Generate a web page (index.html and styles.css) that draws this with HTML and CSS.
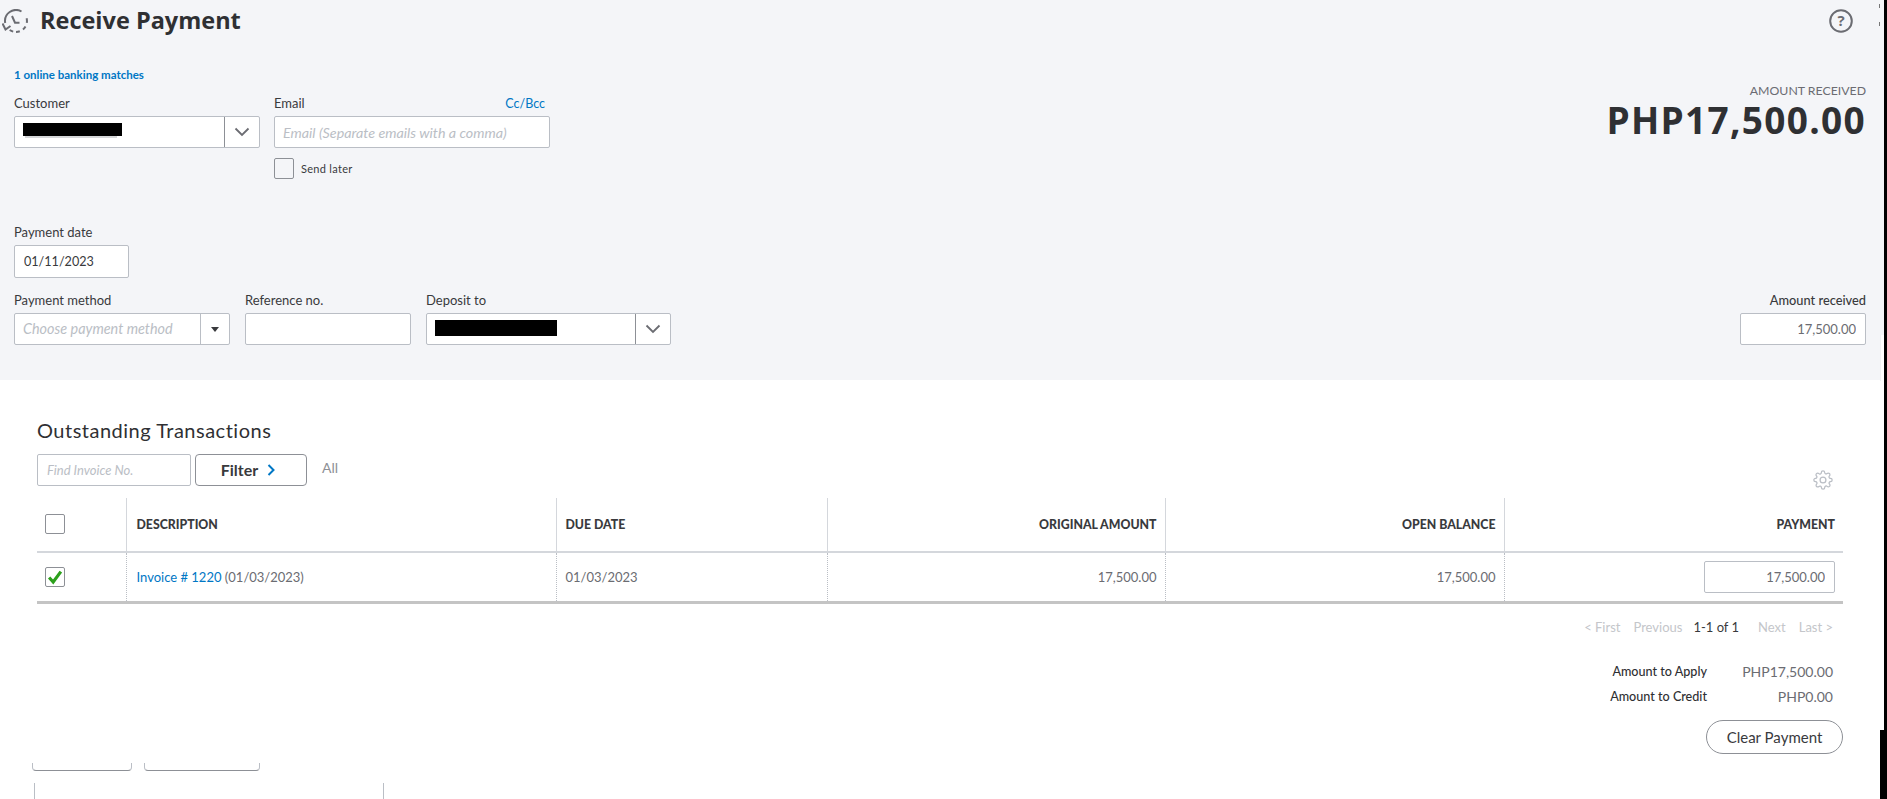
FILE: index.html
```html
<!DOCTYPE html>
<html lang="en">
<head>
<meta charset="utf-8">
<title>Receive Payment</title>
<link rel="stylesheet" href="styles.css">
</head>
<body>
<div class="page">
  <main class="main">
    <section class="panel">
      <header class="title-row">
        <svg class="history-icon" viewBox="0 0 26 24" width="26" height="24" aria-hidden="true">
          <path class="ic-line" d="M3.200 14A11 11 0 0 1 19.500 2.500"/>
          <path class="ic-line" d="M24.600 9.200A11 11 0 0 1 24.800 13.900M23.500 17.500A11 11 0 0 1 21 20.400M17.800 22.300A11 11 0 0 1 14 23M11.200 22.600A11 11 0 0 1 7.700 21"/>
          <path class="ic-line" d="M0.500 14.500L3.500 20.500L8.500 17"/>
          <path class="ic-line" d="M10 7L13 13.700L17.500 13.700"/>
        </svg>
        <h1 class="title">Receive Payment</h1>
        <svg class="help-icon" viewBox="0 0 24 24" width="24" height="24" aria-hidden="true">
          <circle class="ic-line" cx="12" cy="12" r="10.800"/>
          <text class="help-q" x="12" y="17">?</text>
        </svg>
      </header>

      <div class="top-row">
        <div class="top-left">
          <a class="match-link">1 online banking matches</a>
          <div class="field-row">
            <div class="field w-customer">
              <label class="label">Customer</label>
              <div class="combo">
                <span class="combo-value"><span class="redact redact-customer"></span><span class="smudge"></span></span>
                <span class="combo-btn combo-btn-wide">
                  <svg class="chev" viewBox="0 0 16 10" width="16" height="10" aria-hidden="true"><path d="M1.500 1.500L8 8l6.500-6.500"/></svg>
                </span>
              </div>
            </div>
            <div class="field w-email">
              <div class="label-row">
                <label class="label">Email</label>
                <a class="cc">Cc/Bcc</a>
              </div>
              <input class="input input-roomy" type="text" placeholder="Email (Separate emails with a comma)">
              <div class="check-row">
                <span class="check"></span>
                <span class="small-text">Send later</span>
              </div>
            </div>
          </div>
        </div>
        <div class="amount-top">
          <div class="amount-caption">AMOUNT RECEIVED</div>
          <div class="amount-big">PHP17,500.00</div>
        </div>
      </div>

      <div class="field date-field">
        <label class="label">Payment date</label>
        <input class="input date-input" type="text" value="01/11/2023">
      </div>

      <div class="method-row">
        <div class="field w-method">
          <label class="label">Payment method</label>
          <div class="combo">
            <span class="combo-value placeholder">Choose payment method</span>
            <span class="combo-btn combo-btn-narrow"><span class="caret"></span></span>
          </div>
        </div>
        <div class="field w-ref">
          <label class="label">Reference no.</label>
          <input class="input" type="text">
        </div>
        <div class="field w-deposit">
          <label class="label">Deposit to</label>
          <div class="combo">
            <span class="combo-value"><span class="redact redact-deposit"></span></span>
            <span class="combo-btn combo-btn-deposit">
              <svg class="chev" viewBox="0 0 16 10" width="16" height="10" aria-hidden="true"><path d="M1.500 1.500L8 8l6.500-6.500"/></svg>
            </span>
          </div>
        </div>
        <div class="field w-received">
          <label class="label label-strong">Amount received</label>
          <input class="input num-input" type="text" value="17,500.00">
        </div>
      </div>
    </section>

    <section class="lower">
      <h2 class="section-title">Outstanding Transactions</h2>
      <div class="filter-row">
        <input class="input find-input" type="text" placeholder="Find Invoice No.">
        <button class="filter-btn" type="button">Filter
          <svg class="filter-chev" viewBox="0 0 8 12" width="8" height="12" aria-hidden="true"><path d="M1.500 1l5 5-5 5"/></svg>
        </button>
        <span class="filter-all">All</span>
        <svg class="gear" viewBox="0 0 24 24" width="20" height="20" aria-hidden="true">
          <circle cx="12" cy="12" r="3.500"/>
          <path d="M19.400 15a1.650 1.650 0 0 0 .33 1.820l.06.06a2 2 0 0 1 0 2.830 2 2 0 0 1-2.830 0l-.06-.06a1.650 1.650 0 0 0-1.820-.33 1.650 1.650 0 0 0-1 1.510V21a2 2 0 0 1-2 2 2 2 0 0 1-2-2v-.09A1.650 1.650 0 0 0 9 19.400a1.650 1.650 0 0 0-1.820.33l-.06.06a2 2 0 0 1-2.830 0 2 2 0 0 1 0-2.830l.06-.06a1.650 1.650 0 0 0 .33-1.820 1.650 1.650 0 0 0-1.510-1H3a2 2 0 0 1-2-2 2 2 0 0 1 2-2h.09A1.650 1.650 0 0 0 4.600 9a1.650 1.650 0 0 0-.33-1.820l-.06-.06a2 2 0 0 1 0-2.830 2 2 0 0 1 2.830 0l.06.06a1.650 1.650 0 0 0 1.820.33H9a1.650 1.650 0 0 0 1-1.510V3a2 2 0 0 1 2-2 2 2 0 0 1 2 2v.09a1.650 1.650 0 0 0 1 1.510 1.650 1.650 0 0 0 1.820-.33l.06-.06a2 2 0 0 1 2.830 0 2 2 0 0 1 0 2.830l-.06.06a1.650 1.650 0 0 0-.33 1.820V9a1.650 1.650 0 0 0 1.510 1H21a2 2 0 0 1 2 2 2 2 0 0 1-2 2h-.09a1.650 1.650 0 0 0-1.510 1z"/>
        </svg>
      </div>

      <table class="tx-table">
        <colgroup>
          <col class="col-check"><col class="col-desc"><col class="col-due"><col class="col-orig"><col class="col-open"><col class="col-pay">
        </colgroup>
        <thead>
          <tr>
            <th class="cell-check"><span class="check check-head"></span></th>
            <th>DESCRIPTION</th>
            <th class="cell-due">DUE DATE</th>
            <th class="right">ORIGINAL AMOUNT</th>
            <th class="right">OPEN BALANCE</th>
            <th class="right">PAYMENT</th>
          </tr>
        </thead>
        <tbody>
          <tr>
            <td class="cell-check">
              <span class="check check-head check-on">
                <svg viewBox="0 0 20 20" width="18" height="18" aria-hidden="true"><path d="M3.500 10.500l4.500 5L16.500 4" class="tick"/></svg>
              </span>
            </td>
            <td><a class="inv-link">Invoice # 1220</a> (01/03/2023)</td>
            <td class="cell-due">01/03/2023</td>
            <td class="right">17,500.00</td>
            <td class="right">17,500.00</td>
            <td class="right"><input class="input pay-input" type="text" value="17,500.00"></td>
          </tr>
        </tbody>
      </table>

      <nav class="pager">
        <span class="pg-off">&lt; First</span>
        <span class="pg-off">Previous</span>
        <span class="pg-on">1-1 of 1</span>
        <span class="pg-off">Next</span>
        <span class="pg-off">Last &gt;</span>
      </nav>

      <div class="totals">
        <span class="total-label">Amount to Apply</span><span class="total-value">PHP17,500.00</span>
        <span class="total-label">Amount to Credit</span><span class="total-value">PHP0.00</span>
      </div>

      <div class="clear-row"><button class="clear-btn" type="button">Clear Payment</button></div>

      <div class="stubs">
        <span class="stub stub-a"></span>
        <span class="stub stub-b"></span>
      </div>
      <div class="memo-edge"></div>
    </section>
  </main>
  <div class="edge"></div>
  <span class="tick-mark tick-a"></span>
  <span class="tick-mark tick-b"></span>
  <span class="white-notch"></span>
  <span class="black-notch"></span>
</div>
</body>
</html>
```

FILE: styles.css
```css
* { box-sizing: border-box; }
html, body { margin: 0; height: 799px; overflow: hidden; background: #fff; }
body { font-family: "Lato", "Open Sans", sans-serif; font-size: 13px; color: #393a3d; }

.page { position: relative; display: flex; width: 1887px; height: 799px; }
.main { flex: 1; min-width: 0; display: flex; flex-direction: column; }
.edge { width: 3px; background: #000; }

.panel { height: 381px; padding: 0 18px 0 14px; background: #f4f5f8; }
.title-row { display: flex; align-items: center; height: 41px; margin-left: -12px; }
.history-icon { flex: none; }
.ic-line { fill: none; stroke: #6b6c72; stroke-width: 2; }
.title { margin: 0 0 0 12px; font-family: "Open Sans", sans-serif; font-size: 23.500px; font-weight: 700; line-height: 41px; color: #2f3033; }
.help-icon { margin-left: auto; margin-right: 13px; flex: none; }
.help-q { font-family: "Open Sans", sans-serif; font-size: 15px; font-weight: 700; fill: #6b6c72; text-anchor: middle; }

.top-row { display: flex; justify-content: space-between; margin-top: 26px; }
.match-link { display: block; font-size: 11.500px; line-height: 16px; font-weight: 700; color: #0077c5; }
.field-row { display: flex; gap: 14px; margin-top: 12px; }
.field { display: flex; flex-direction: column; }
.w-customer { width: 246px; }
.w-email { width: 276px; }
.w-method { width: 216px; }
.w-ref { width: 166px; }
.w-deposit { width: 245px; }
.w-received { width: 126px; margin-left: auto; }

.label { display: block; height: 16px; margin-bottom: 5px; font-size: 13px; line-height: 16px; color: #393a3d; }
.label-strong { text-align: right; font-weight: 500; font-size: 12.800px; }
.label-row { display: flex; justify-content: space-between; padding-right: 5px; }
.cc { font-size: 12.500px; line-height: 17px; color: #0077c5; }

.input { display: block; width: 100%; height: 32px; padding: 0 9px; border: 1px solid #babec5; border-radius: 2px; background: #fff; font-family: inherit; font-size: 13px; color: #393a3d; outline: none; }
.input::placeholder { color: #babec5; font-style: italic; opacity: 1; }
.input-roomy { padding: 0 8px; font-size: 14.300px; }

.combo { display: flex; height: 32px; border: 1px solid #babec5; border-radius: 2px; background: #fff; }
.combo-value { position: relative; flex: 1; min-width: 0; padding-left: 8px; line-height: 30px; }
.placeholder { color: #babec5; font-style: italic; font-size: 14.400px; white-space: nowrap; }
.combo-btn { display: flex; align-items: center; justify-content: center; flex: none; border-left: 1px solid #8d9096; }
.combo-btn-wide { width: 35px; }
.combo-btn-deposit { width: 35px; }
.combo-btn-narrow { width: 29px; border-left-color: #babec5; }
.chev { fill: none; stroke: #6b6c72; stroke-width: 1.800; }
.caret { width: 0; height: 0; border-left: 4px solid transparent; border-right: 4px solid transparent; border-top: 5px solid #393a3d; }
.redact { position: absolute; left: 8px; top: 6px; background: #000; }
.redact-customer { width: 99px; height: 13px; }
.redact-deposit { width: 122px; height: 16px; }
.smudge { position: absolute; left: 10px; top: 19px; width: 92px; height: 2px; background: #d5d6d8; }

.check-row { display: flex; align-items: center; gap: 7px; margin-top: 10px; }
.check { display: block; width: 20px; height: 21px; border: 1px solid #8d9096; border-radius: 2px; background: transparent; }
.small-text { font-size: 11px; color: #393a3d; letter-spacing: 0.3px; }

.amount-top { padding-top: 16px; text-align: right; }
.amount-caption { font-size: 12.300px; line-height: 16px; color: #6b6c72; }
.amount-big { font-family: "Open Sans", sans-serif; font-size: 37px; font-weight: 700; line-height: 42px; letter-spacing: 1.300px; color: #2f3033; }

.date-field { width: 115px; margin-top: 45px; }
.date-input { height: 33px; font-size: 12.600px; }
.method-row { display: flex; gap: 15px; margin-top: 14px; }

.lower { position: relative; width: 1880px; padding: 36px 37px 0; }
.section-title { margin: 0; font-size: 20px; line-height: 28px; font-weight: 400; color: #2f3033; letter-spacing: 0.500px; }
.filter-row { display: flex; height: 32px; margin-top: 10px; }
.find-input { width: 154px; }
.filter-btn { display: flex; align-items: center; justify-content: center; gap: 9px; width: 112px; height: 32px; margin-left: 4px; padding: 0 6px 0 0; border: 1px solid #8d9096; border-radius: 4px; background: #fff; font-family: inherit; font-size: 16px; font-weight: 700; color: #393a3d; }
.filter-chev { fill: none; stroke: #0077c5; stroke-width: 2; }
.filter-all { margin-left: 15px; font-size: 14px; line-height: 28px; color: #8d9096; }
.gear { align-self: flex-end; margin: 0 10px -4px auto; fill: none; stroke: #babec5; stroke-width: 1.500; }

.tx-table { width: 1806px; margin-top: 12px; table-layout: fixed; border-collapse: collapse; }
.col-check { width: 89px; }
.col-desc { width: 430px; }
.col-due { width: 271px; }
.col-orig { width: 338px; }
.col-open { width: 339px; }
.col-pay { width: 339px; }
.tx-table th { height: 54px; padding: 0 8px 0 10px; border-bottom: 2px solid #d4d7dc; border-left: 1px solid #d4d7dc; font-size: 12.300px; font-weight: 900; text-align: left; color: #393a3d; }
.tx-table td { height: 51px; padding: 0 8px 0 10px; border-bottom: 3px solid #c4c4c4; border-left: 1px dotted #babec5; font-size: 13px; color: #6b6c72; }
.tx-table th:first-child, .tx-table td:first-child { border-left: 0; padding: 0 0 0 8px; }
.tx-table .cell-due { padding-left: 9px; }
.tx-table .right { text-align: right; }
.check-head { width: 20px; height: 20px; }
.check-on { display: flex; align-items: center; justify-content: center; }
.tick { fill: none; stroke: #2ca01c; stroke-width: 3.500; }
.inv-link { color: #0077c5; }
.pay-input { width: 131px; margin-left: auto; text-align: right; color: #6b6c72; }
.num-input { text-align: right; color: #6b6c72; }

.pager { display: flex; justify-content: flex-end; gap: 13px; margin-top: 15px; padding-right: 10px; font-size: 13px; line-height: 16px; }
.pg-off { color: #c4c6ca; }
.pg-on { margin-left: -2px; margin-right: 6px; color: #393a3d; }

.totals { display: grid; grid-template-columns: auto 126px; justify-content: end; grid-auto-rows: 25px; margin-top: 24px; padding-right: 10px; align-items: center; }
.total-label { font-size: 12.600px; font-weight: 500; text-align: right; color: #2f3033; }
.total-value { font-size: 14px; text-align: right; color: #6b6c72; }

.clear-row { display: flex; justify-content: flex-end; margin-top: 11px; }
.clear-btn { width: 137px; height: 34px; padding: 0; border: 1px solid #8d9096; border-radius: 17px; background: #fff; font-family: inherit; font-size: 15px; color: #393a3d; }

.stubs { display: flex; gap: 12px; margin: 9px 0 0 -5px; }
.stub { display: block; height: 8px; border: 1px solid #8d9096; border-top: 0; border-left-color: #babec5; border-right-color: #babec5; border-radius: 0 0 4px 4px; }
.stub-a { width: 100px; }
.stub-b { width: 116px; }
.memo-edge { width: 350px; height: 16px; margin: 12px 0 0 -3px; border-left: 1px solid #babec5; border-right: 1px solid #babec5; }

.tick-mark { position: absolute; left: 1879px; width: 1px; height: 4px; background: #777; }
.tick-a { top: 4px; }
.tick-b { top: 22px; }
.white-notch { position: absolute; left: 1880px; top: 335px; width: 4px; height: 46px; background: #fff; border-left: 1px solid #f0f1f3; }
.black-notch { position: absolute; left: 1880px; top: 730px; width: 4px; height: 69px; background: #000; }
```
